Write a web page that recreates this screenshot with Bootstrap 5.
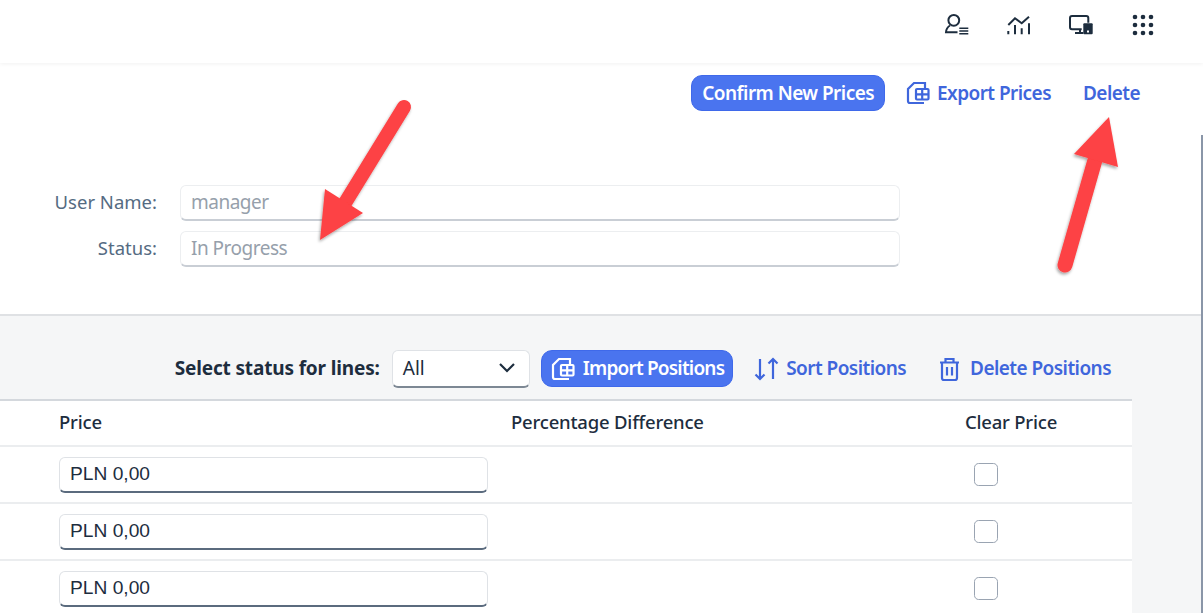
<!DOCTYPE html>
<html lang="en">
<head>
  <meta charset="UTF-8" />
  <meta name="viewport" content="width=device-width, initial-scale=1.0" />
  <title>Price Change</title>
  <link href="https://cdn.jsdelivr.net/npm/bootstrap@5.3.0/dist/css/bootstrap.min.css" rel="stylesheet" />
  <style>
    html, body { height: 100%; overflow: hidden; }
    body { font-family: "Noto Sans", "Open Sans", sans-serif; font-size: 18.5px; color: #1d2d3e; background: #f5f6f7; }
    .shell-bar { height: 63px; background: #fff; box-shadow: 0 1px 4px rgba(0,0,0,.06); position: relative; z-index: 1; padding: 0 47px 13px 0; gap: 36px; }
    .shell-bar svg { width: 26px; height: 26px; fill: none; stroke: #1d2d3e; stroke-width: 2; }
    .shell-bar .grid-icon { fill: #1d2d3e; stroke: none; }
    .head-panel { height: 253px; background: #fff; border-bottom: 2px solid #dfe1e4; padding: 12px 63px 0 0; }
    .sap-btn { font-size: 19px; font-weight: 600; letter-spacing: -.55px; line-height: 1; border-radius: 11px; padding: 0 10px; height: 36px; color: #fff; background: #4a74ef; border: 1px solid #3f69ea; }
    .sap-btn:hover { color: #fff; background: #4a74ef; }
    .sap-link { font-size: 19px; font-weight: 600; letter-spacing: -.55px; line-height: 1; color: #3f66dc; text-decoration: none; gap: 7px; }
    .sap-link svg { width: 26px; height: 26px; fill: none; stroke: #3f66dc; stroke-width: 2.2; }
    .sap-btn svg { width: 26px; height: 26px; fill: none; stroke: #fff; stroke-width: 2.2; }
    .export-link { margin-left: 19px; }
    .delete-link { margin-left: 32px; }
    .sort-link { margin-left: 20px; }
    .trash-link { margin-left: 31px; }
    .import-btn { letter-spacing: -.8px; height: 37px; padding: 0 8px 0 7px; }
    .form-area { margin-top: 74px; width: 900px; row-gap: 10px; }
    .field-label { width: 157px; text-align: right; color: #556b82; padding-bottom: 2px; }
    .ro-input { margin-left: 23px; width: 720px; height: 36px; padding: 0 10px; font-size: 19px; letter-spacing: -.5px; color: #96a0ab; background: #fff; border: 1px solid #eceef0; border-bottom: 2px solid #c9ced5; border-radius: 6px; }
    .list-bar { height: 85px; padding: 22px 21px 0 0; width: 1132px; border-bottom: 2px solid #d4d8dd; }
    .status-label { font-weight: 700; font-size: 19px; letter-spacing: -.15px; margin-right: 12px; }
    .status-select { width: 138px; height: 38px; padding: 0 13px 0 10px; background: #fff; border: 1px solid #dfe2e6; border-bottom: 2px solid #7d8894; border-radius: 6px; margin-right: 11px; font-size: 19px; }
    .status-select svg { width: 18px; height: 12px; fill: none; stroke: #1d2d3e; stroke-width: 2.2; }
    .price-table { width: 1132px; margin: 0; background: #fff; table-layout: fixed; }
    .price-table th, .price-table td { background: #fff; border-bottom: 2px solid #ebedef; padding: 0; vertical-align: middle; color: #1d2d3e; }
    .price-table th { height: 45px; padding-bottom: 2px; font-size: 18.5px; font-weight: 550; letter-spacing: -.2px; }
    .price-table td { height: 57px; }
    .price-input { width: 429px; height: 36px; padding: 1px 10px 0; font-family: "Liberation Sans", Arial, sans-serif; font-size: 19.2px; color: #1d2d3e; background: #fff; border: 1px solid #dfe2e6; border-bottom: 2px solid #5b6b7e; border-radius: 6px; }
    .clear-box { display: block; width: 24px; height: 23px; margin: 0 0 0 84px; border: 1.5px solid #9aa4b2; border-radius: 6px; background: #fff; }
    .c1 { width: 59px; } .c2 { width: 452px; } .c3 { width: 379px; } .c4 { width: 242px; }
    .edge-line { position: absolute; top: 135px; right: 0; bottom: 0; width: 2px; background: #8a96a8; }
    .arrows { position: absolute; left: 0; top: 0; width: 1203px; height: 613px; pointer-events: none; z-index: 5; }
  </style>
</head>
<body class="position-relative">

  <div class="shell-bar d-flex align-items-center justify-content-end">
    <svg viewBox="0 0 26 26"><circle cx="9.800" cy="8.300" r="5.400"/><path d="M6 13.500C3.500 15 2.200 17 2 20.300h11.500"/><path d="M15.300 16.300h9M15.300 19h9M15.300 21.700h9" stroke-width="1.500"/></svg>
    <svg viewBox="0 0 26 26"><path d="M2.300 13L9 6.300l6.700 5L23 4.700"/><path d="M2.300 19v3.300M9 13v9.300M15.700 16.300v6M23 11.300v11"/></svg>
    <svg viewBox="0 0 26 26"><path d="M20.300 10.700V6a2 2 0 0 0-2-2H4a2 2 0 0 0-2 2v9.300a2 2 0 0 0 2 2h9.700M12 17.300v3.400M7 21h8.300"/><rect x="15.300" y="11.300" width="9.400" height="11" rx="1" fill="#1d2d3e" stroke="none"/><rect x="19" y="18.500" width="2" height="2" fill="#fff" stroke="none"/></svg>
    <svg class="grid-icon" viewBox="0 0 26 26"><circle cx="5" cy="5" r="2.300"/><circle cx="13" cy="5" r="2.300"/><circle cx="21" cy="5" r="2.300"/><circle cx="5" cy="13" r="2.300"/><circle cx="13" cy="13" r="2.300"/><circle cx="21" cy="13" r="2.300"/><circle cx="5" cy="21" r="2.300"/><circle cx="13" cy="21" r="2.300"/><circle cx="21" cy="21" r="2.300"/></svg>
  </div>

  <div class="head-panel">
    <div class="d-flex justify-content-end align-items-center">
      <a href="#" class="btn sap-btn d-inline-flex align-items-center">Confirm New Prices</a>
      <a href="#" class="sap-link export-link d-inline-flex align-items-center">
        <svg viewBox="0 0 26 26"><path d="M21 8V3H10L4 9v12a2 2 0 0 0 2 2h14"/><rect x="12" y="9" width="12.500" height="10.500" rx="1"/><path d="M12 14.300h12.500M18.200 9v10.500"/></svg>Export Prices</a>
      <a href="#" class="sap-link delete-link">Delete</a>
    </div>
    <div class="form-area d-flex flex-column">
      <div class="d-flex align-items-center"><span class="field-label">User Name:</span><div class="ro-input d-flex align-items-center">manager</div></div>
      <div class="d-flex align-items-center"><span class="field-label">Status:</span><div class="ro-input d-flex align-items-center">In Progress</div></div>
    </div>
  </div>

  <div class="list-bar d-flex justify-content-end align-items-center">
    <span class="status-label">Select status for lines:</span>
    <div class="status-select d-flex align-items-center justify-content-between">All
      <svg viewBox="0 0 18 12"><path d="M2 2l7 7 7-7"/></svg>
    </div>
    <a href="#" class="btn sap-btn import-btn d-inline-flex align-items-center gap-2">
      <svg viewBox="0 0 26 26"><path d="M21 8V3H10L4 9v12a2 2 0 0 0 2 2h14"/><rect x="12" y="9" width="12.500" height="10.500" rx="1"/><path d="M12 14.300h12.500M18.200 9v10.500"/></svg>Import Positions</a>
    <a href="#" class="sap-link sort-link d-inline-flex align-items-center">
      <svg viewBox="0 0 26 26"><path d="M7 3v20M2.500 18.500L7 23l4.500-4.500M20 23V3M15.500 7.500L20 3l4.500 4.500"/></svg>Sort Positions</a>
    <a href="#" class="sap-link trash-link d-inline-flex align-items-center">
      <svg viewBox="0 0 26 26"><path d="M3 6.500h19M8.500 6.500V3h8v3.500M5 6.500V22a2 2 0 0 0 2 2h11a2 2 0 0 0 2-2V6.500M10 11v8.500M15 11v8.500"/></svg>Delete Positions</a>
  </div>

  <table class="table price-table">
    <colgroup><col class="c1"><col class="c2"><col class="c3"><col class="c4"></colgroup>
    <thead>
      <tr><th></th><th>Price</th><th>Percentage Difference</th><th class="text-center">Clear Price</th></tr>
    </thead>
    <tbody>
      <tr><td></td><td><div class="price-input d-flex align-items-center">PLN 0,00</div></td><td></td><td><input class="form-check-input clear-box" type="checkbox" /></td></tr>
      <tr><td></td><td><div class="price-input d-flex align-items-center">PLN 0,00</div></td><td></td><td><input class="form-check-input clear-box" type="checkbox" /></td></tr>
      <tr><td></td><td><div class="price-input d-flex align-items-center">PLN 0,00</div></td><td></td><td><input class="form-check-input clear-box" type="checkbox" /></td></tr>
    </tbody>
  </table>

  <div class="edge-line"></div>

  <svg class="arrows" viewBox="0 0 1203 613">
    <defs><filter id="sh" x="-20%" y="-20%" width="140%" height="140%"><feDropShadow dx="-1" dy="2" stdDeviation="1.500" flood-color="#000" flood-opacity=".35"/></filter></defs>
    <g filter="url(#sh)">
      <path d="M404 107L345 203" stroke="#fd4244" stroke-width="14" stroke-linecap="round" fill="none"/>
      <path d="M325 189L320 240L363 213Z" fill="#fd4244"/>
      <path d="M1065 265L1095 160" stroke="#fd4244" stroke-width="15" stroke-linecap="round" fill="none"/>
      <path d="M1109 117L1074 154L1118 167Z" fill="#fd4244"/>
    </g>
  </svg>
</body>
</html>
